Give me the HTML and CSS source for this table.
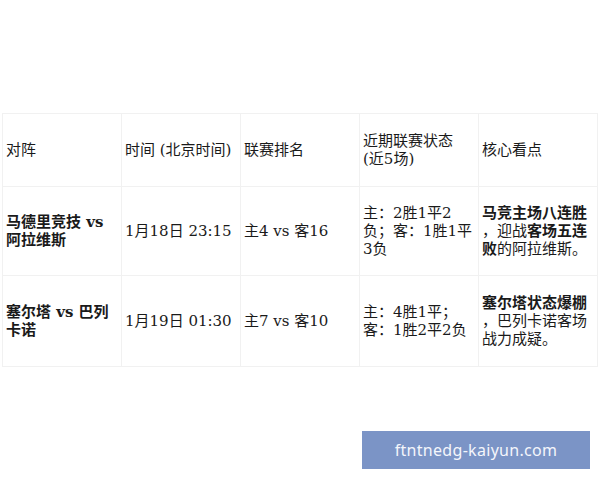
FILE: index.html
```html
<!DOCTYPE html>
<html lang="zh">
<head>
<meta charset="utf-8">
<link rel="stylesheet" href="styles.css">
</head>
<body>
<div class="page">
  <table class="matches">
    <colgroup>
      <col class="c1"><col class="c2"><col class="c3"><col class="c4"><col class="c5">
    </colgroup>
    <tr class="head">
      <td>对阵</td>
      <td>时间 (北京时间)</td>
      <td>联赛排名</td>
      <td>近期联赛状态<br>(近5场)</td>
      <td>核心看点</td>
    </tr>
    <tr class="r1">
      <td class="team">马德里竞技 vs 阿拉维斯</td>
      <td>1月18日 23:15</td>
      <td>主4 vs 客16</td>
      <td>主：2胜1平2<br>负；客：1胜1平<br>3负</td>
      <td><b>马竞主场八连胜</b><br>，迎战<b>客场五连<br>败</b>的阿拉维斯。</td>
    </tr>
    <tr class="r2">
      <td class="team">塞尔塔 vs 巴列卡诺</td>
      <td>1月19日 01:30</td>
      <td>主7 vs 客10</td>
      <td>主：4胜1平；<br>客：1胜2平2负</td>
      <td><b>塞尔塔状态爆棚</b><br>，巴列卡诺客场<br>战力成疑。</td>
    </tr>
  </table>
  <div class="badge">ftntnedg-kaiyun.com</div>
</div>
</body>
</html>
```
FILE: styles.css
```css
html, body {
  margin: 0;
  padding: 0;
  background: #ffffff;
}
.page {
  position: relative;
  width: 600px;
  height: 480px;
  padding: 113px 0 0 2px;
  box-sizing: border-box;
}
.matches {
  border-collapse: collapse;
  table-layout: fixed;
  width: 595px;
  font-family: "DejaVu Serif", "Noto Sans CJK SC", serif;
  font-size: 15px;
  line-height: 18px;
  color: #1a1a1a;
}
.matches col { width: 119px; }
.matches td {
  border: 1px solid #f1f1f1;
  padding: 0 3px;
  vertical-align: middle;
  text-align: left;
  word-break: normal;
}
.matches td b,
.matches td.team {
  font-weight: bold;
}
.head { height: 73px; }
.r1 { height: 89px; }
.r2 { height: 91px; }
.badge {
  position: absolute;
  left: 362px;
  top: 431px;
  width: 228px;
  height: 38px;
  background: #7b94c6;
  color: #f4f6fb;
  font-family: "Noto Sans", "DejaVu Sans", sans-serif;
  font-size: 16px;
  line-height: 38px;
  text-align: center;
  letter-spacing: 0.3px;
}
```
